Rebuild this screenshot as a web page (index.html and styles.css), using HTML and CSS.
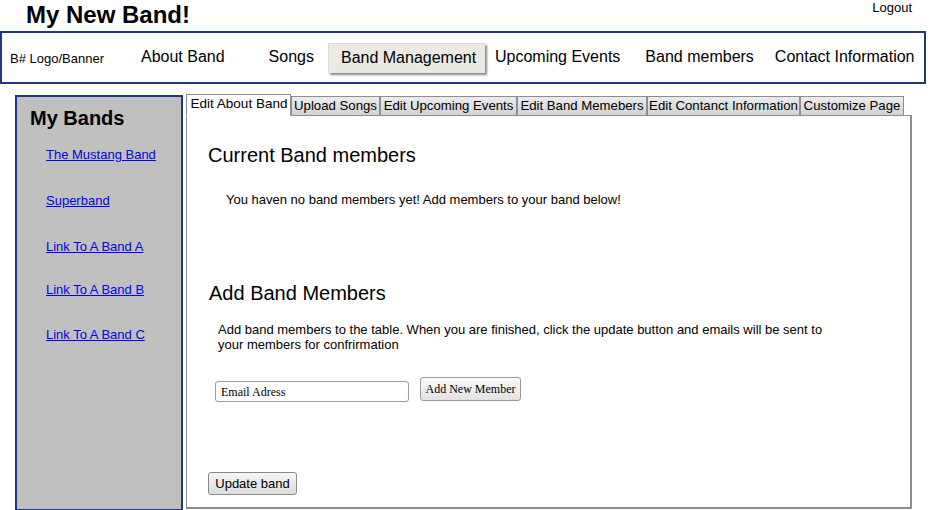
FILE: index.html
```html
<!DOCTYPE html>
<html>
<head>
<meta charset="utf-8">
<link rel="stylesheet" href="styles.css">
</head>
<body>
<header class="top">
  <h1 class="title">My New Band!</h1>
  <a class="logout">Logout</a>
</header>
<nav class="nav">
  <span class="logo">B# Logo/Banner</span>
  <span class="item about">About Band</span>
  <span class="item songs">Songs</span>
  <span class="item active">Band Management</span>
  <span class="item events">Upcoming Events</span>
  <span class="item members">Band members</span>
  <span class="item contact">Contact Information</span>
</nav>
<div class="main">
  <aside class="sidebar">
    <h2 class="side-title">My Bands</h2>
    <ul class="bands">
      <li><a href="#">The Mustang Band</a></li>
      <li><a href="#">Superband</a></li>
      <li><a href="#">Link To A Band A</a></li>
      <li><a href="#">Link To A Band B</a></li>
      <li><a href="#">Link To A Band C</a></li>
    </ul>
  </aside>
  <section class="work">
    <div class="tabs">
      <span class="tab tab-on">Edit About Band</span>
      <span class="tab t-upload">Upload Songs</span>
      <span class="tab t-events">Edit Upcoming Events</span>
      <span class="tab t-members">Edit Band Memebers</span>
      <span class="tab t-contact">Edit Contanct Information</span>
      <span class="tab t-custom">Customize Page</span>
    </div>
    <div class="panel">
      <h3 class="h-current">Current Band members</h3>
      <p class="none">You haven no band members yet! Add members to your band below!</p>
      <h3 class="h-add">Add Band Members</h3>
      <p class="desc">Add band members to the table. When you are finished, click the update button and emails will be sent to your members for confrirmation</p>
      <div class="form-row">
        <input class="email" type="text" value="Email Adress">
        <button class="add-btn">Add New Member</button>
      </div>
      <button class="update-btn">Update band</button>
    </div>
  </section>
</div>
</body>
</html>
```

FILE: styles.css
```css
* { box-sizing: border-box; }
html, body { margin: 0; padding: 0; background: #fff; }
body {
  font-family: "Liberation Sans", Arial, sans-serif;
  color: #000;
  width: 934px;
  height: 510px;
  overflow: hidden;
}
.top {
  display: flex;
  justify-content: space-between;
  align-items: flex-start;
  height: 31px;
}
.title {
  margin: 0 0 0 26px;
  font-size: 24px;
  font-weight: bold;
  line-height: 29px;
}
.logout {
  font-size: 13px;
  line-height: 15px;
  margin: 0 22px 0 0;
  color: #000;
}
.nav {
  width: 926px;
  height: 53px;
  border: 2px solid #1f3785;
  display: flex;
  align-items: center;
  padding-bottom: 2px;
}
.logo {
  font-size: 13px;
  margin-left: 8px;
  margin-top: 4px;
  white-space: nowrap;
  flex-shrink: 0;
}
.item {
  font-size: 16px;
  line-height: 19px;
  white-space: nowrap;
  flex-shrink: 0;
}
.about { margin-left: 37px; }
.songs { margin-left: 44px; }
.active {
  margin-left: 14px;
  background: #ece9e2;
  padding: 4px 9px 5px 12px;
  height: 30px;
  width: 157px;
  box-shadow: 2px 2px 2px #8a8a8a;
  border-left: 1px solid #dcd8cf;
  border-top: 1px solid #dcd8cf;
  margin-top: 2px;
}
.events { margin-left: 10px; }
.members { margin-left: 25px; }
.contact { margin-left: 21px; }
.main {
  display: flex;
  margin-top: 11px;
  align-items: flex-start;
}
.sidebar {
  margin-left: 15px;
  width: 168px;
  height: 416px;
  background: #c0c0c0;
  border: 2px solid #1f3785;
  padding: 9px 0 0 13px;
}
.side-title {
  margin: 0;
  font-size: 20px;
  font-weight: bold;
  line-height: 24px;
}
.bands {
  list-style: none;
  margin: 0;
  padding: 0 0 0 16px;
  font-size: 13px;
  line-height: 15px;
}
.bands li { margin-top: 31px; }
.bands li:first-child { margin-top: 17px; }
.bands li:nth-child(4) { margin-top: 28px; }
.bands li:nth-child(5) { margin-top: 30px; }
.bands a { color: #0000ee; text-decoration: underline; }
.work {
  margin-left: 3px;
  width: 727px;
  display: flex;
  flex-direction: column;
  margin-top: -1px;
}
.tabs {
  display: flex;
  align-items: flex-end;
  height: 21px;
  position: relative;
  z-index: 1;
}
.tab {
  font-size: 13.2px;
  line-height: 16px;
  height: 19px;
  padding: 1px 0 0 0;
  text-align: center;
  border: 1px solid #8d8d95;
  border-bottom: none;
  background: linear-gradient(#ececec, #d2d2d2);
  white-space: nowrap;
  flex-shrink: 0;
}
.tab-on {
  width: 105px;
  height: 22px;
  font-size: 13.5px;
  background: #fff;
  padding: 1px 1px 0 2px;
  border: 1px solid #8d8d95;
  border-bottom: 1px solid #fff;
  margin-bottom: -1px;
}
.t-upload { width: 89px; }
.t-events { width: 137px; }
.t-members { width: 130px; }
.t-contact { width: 153px; }
.t-custom { width: 104px; }
.panel {
  width: 726px;
  height: 394px;
  border: 1px solid #8d8d95;
  border-width: 1px 2px 2px 1px;
  padding: 0 0 0 21px;
}
.h-current {
  margin: 27px 0 0 0;
  font-size: 20px;
  font-weight: normal;
  line-height: 24px;
}
.none {
  margin: 25px 0 0 18px;
  font-size: 13px;
  line-height: 15px;
}
.h-add {
  margin: 74px 0 0 1px;
  font-size: 20px;
  font-weight: normal;
  line-height: 24px;
}
.desc {
  margin: 17px 0 0 10px;
  font-size: 13px;
  line-height: 15px;
  width: 620px;
}
.form-row {
  display: flex;
  align-items: flex-end;
  margin-top: 25px;
  margin-left: 7px;
}
.email {
  width: 194px;
  height: 21px;
  border: 1px solid #a29b90;
  border-radius: 3px;
  font-family: "Liberation Serif", "Times New Roman", serif;
  font-size: 12px;
  padding: 2px 5px 0 5px;
  margin: 0;
  color: #000;
}
.add-btn {
  margin: 0 0 1px 11px;
  height: 24px;
  width: 101px;
  padding: 0;
  font-family: "Liberation Serif", "Times New Roman", serif;
  font-size: 12px;
  border: 1px solid #9a9a9a;
  border-radius: 3px;
  background: linear-gradient(#fafafa, #e2e2e2);
  color: #000;
}
.update-btn {
  display: block;
  margin: 70px 0 0 0;
  height: 23px;
  width: 89px;
  padding: 0;
  font-family: "Liberation Sans", Arial, sans-serif;
  font-size: 13px;
  border: 1px solid #8a8a8a;
  border-radius: 3px;
  background: linear-gradient(#f6f6f6, #dcdcdc);
  color: #000;
}
```
